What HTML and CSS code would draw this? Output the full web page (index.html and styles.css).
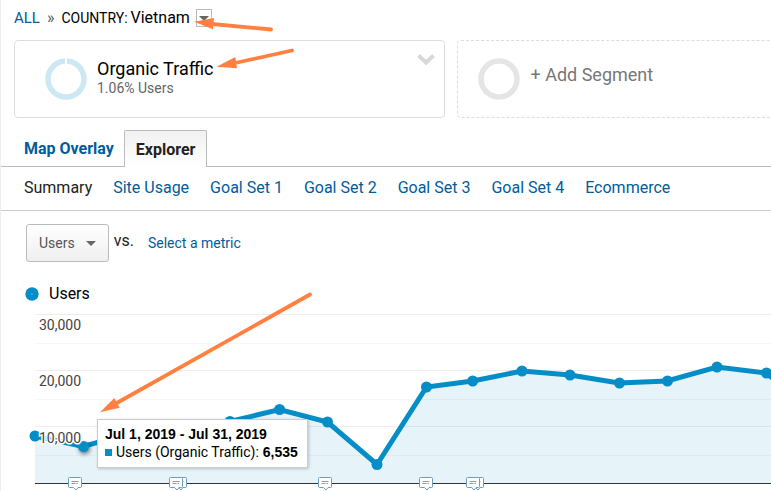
FILE: index.html
```html
<!DOCTYPE html>
<html lang="en">
<head>
<meta charset="utf-8">
<title>Analytics: Vietnam</title>
<link rel="stylesheet" href="styles.css">
</head>
<body>
<main class="report">
  <nav class="crumbs" aria-label="Breadcrumb">
    <a class="crumb-all" href="#">ALL</a>
    <span class="crumb-sep">»</span>
    <span class="crumb-kind">COUNTRY:</span>
    <span class="crumb-value">Vietnam</span>
    <button class="crumb-menu" type="button" aria-label="Change country"><span class="caret"></span></button>
  </nav>

  <section class="segments">
    <div class="segment">
      <svg class="ring" width="42" height="42" viewBox="0 0 42 42" aria-hidden="true">
        <circle cx="21" cy="21" r="18" fill="none" stroke="#cde8f5" stroke-width="5.5"/>
        <path d="M21 0v6" stroke="#fff" stroke-width="2"/>
      </svg>
      <div class="segment-text">
        <span class="segment-name">Organic Traffic</span>
        <span class="segment-share">1.06% Users</span>
      </div>
      <button class="segment-menu" type="button" aria-label="Segment options">
        <svg width="18" height="12" viewBox="0 0 18 12" aria-hidden="true"><path d="M1.500 2.500 9 9.500l7.500-7" fill="none" stroke="#d8d8d8" stroke-width="4"/></svg>
      </button>
    </div>
    <button class="segment segment-add" type="button">
      <svg class="ring" width="42" height="42" viewBox="0 0 42 42" aria-hidden="true">
        <circle cx="21" cy="21" r="18" fill="none" stroke="#e5e5e5" stroke-width="5.5"/>
      </svg>
      <span class="add-label">+ Add Segment</span>
    </button>
  </section>

  <nav class="tabs" aria-label="Views">
    <a class="tab" href="#">Map Overlay</a>
    <a class="tab tab-active" href="#">Explorer</a>
  </nav>

  <nav class="subtabs" aria-label="Metric groups">
    <a class="current" href="#">Summary</a>
    <a href="#">Site Usage</a>
    <a href="#">Goal Set 1</a>
    <a href="#">Goal Set 2</a>
    <a href="#">Goal Set 3</a>
    <a href="#">Goal Set 4</a>
    <a href="#">Ecommerce</a>
  </nav>

  <div class="metrics">
    <button class="metric" type="button">Users <span class="caret"></span></button>
    <span class="versus">vs.</span>
    <a class="metric-link" href="#">Select a metric</a>
  </div>

  <div class="legend">
    <svg width="14" height="14" viewBox="0 0 14 14" aria-hidden="true"><circle cx="7" cy="7" r="6.700" fill="#058dc7"/><circle cx="7" cy="7" r=".5" fill="#fff"/></svg>
    <span>Users</span>
  </div>

  <section class="chart">
    <svg class="plot" width="100%" height="186" role="img" aria-label="Users over time">
      <defs>
        <g id="note">
          <path d="M1.500 .5h11q1 0 1 1v8q0 1-1 1h-2.500l-2 2.500-2.500-2.500H1.500q-1 0-1-1V1.500q0-1 1-1z" fill="#fff" stroke="#6f9dbf"/>
          <path d="M3.500 4.500h7M3.500 6.500h4M8.500 6.500h1.500" stroke="#999" fill="none"/>
        </g>
      </defs>
      <g class="grid-major">
        <path d="M35 9.500H4000M35 65.500H4000M35 121.500H4000"/>
      </g>
      <g class="grid-minor">
        <path d="M35 38.500H4000M35 94.500H4000M35 150.500H4000"/>
      </g>
      <path class="area" d="M35 131 83 141.500 132 128 181 124 230 116.500 279.600 104.500 327.500 117 377 159.500 426.500 82 472.700 76 522 66 570 70 619 78 667 76 717 62 766 68 815 105V178H35z"/>
      <path class="line" d="M35 131 83 141.500 132 128 181 124 230 116.500 279.600 104.500 327.500 117 377 159.500 426.500 82 472.700 76 522 66 570 70 619 78 667 76 717 62 766 68 815 105"/>
      <g class="points">
        <circle cx="35" cy="131" r="5.500"/>
        <circle class="hovered" cx="83.500" cy="141.500" r="5.500"/>
        <circle cx="230" cy="116.500" r="5.500"/>
        <circle cx="279.600" cy="104.500" r="5.500"/>
        <circle cx="327.500" cy="117" r="5.500"/>
        <circle cx="377" cy="159.500" r="5.500"/>
        <circle cx="426.500" cy="82" r="5.500"/>
        <circle cx="472.700" cy="76" r="5.500"/>
        <circle cx="522" cy="66" r="5.500"/>
        <circle cx="570" cy="70" r="5.500"/>
        <circle cx="619.500" cy="78" r="5.500"/>
        <circle cx="667.500" cy="76" r="5.500"/>
        <circle cx="717" cy="62" r="5.500"/>
        <circle cx="766.500" cy="68" r="5.500"/>
      </g>
      <path d="M35 178.500H4000" stroke="#333"/>
      <g class="scale">
        <text x="39" y="25">30,000</text>
        <text x="39" y="81">20,000</text>
        <text x="39" y="138">10,000</text>
      </g>
      <use href="#note" x="68" y="172"/>
      <use href="#note" x="173" y="172"/><use href="#note" x="169" y="172"/>
      <use href="#note" x="318" y="172"/>
      <use href="#note" x="419" y="172"/>
      <use href="#note" x="470" y="172"/><use href="#note" x="466" y="172"/>
    </svg>
    <div class="tooltip">
      <strong>Jul 1, 2019 - Jul 31, 2019</strong>
      <div class="tooltip-row"><span class="swatch"></span><span>Users (Organic Traffic):</span><strong>6,535</strong></div>
    </div>
  </section>

  <svg class="arrows" width="771" height="491" viewBox="0 0 771 491" aria-hidden="true">
    <g fill="none" stroke="#ff8040" stroke-width="3.800" stroke-linecap="round">
      <path d="M212 24 271 29.500M235 63 292 50.500M115 404 310 294.500"/>
    </g>
    <path fill="#ff8040" d="M194 21.700 214 18 213 29.300zM216.500 66.700 235.300 57 237 68.300zM100 412.300 114.300 398 119.700 407.700z"/>
  </svg>
</main>
</body>
</html>
```

FILE: styles.css
```css
* {
  box-sizing: border-box;
}

body {
  margin: 0;
  background: #fff;
  color: #222;
  font: 16px/20px Roboto, "Liberation Sans", sans-serif;
  overflow: hidden;
}

a {
  color: #005c9c;
  text-decoration: none;
}

button {
  font: inherit;
  color: inherit;
  padding: 0;
  background: none;
  border: 0;
}

.report {
  position: relative;
  border-left: 1px solid #eee;
  overflow: hidden;
}

.crumbs {
  display: flex;
  align-items: center;
  height: 40px;
  padding: 0 13px 4px;
  color: #000;
}

.crumb-all {
  font-size: 15px;
}

.crumb-sep {
  margin: 0 7px;
  color: #555;
}

.crumb-kind {
  margin-right: 3px;
  font-size: 14px;
}

.crumb-menu {
  display: flex;
  align-items: center;
  justify-content: center;
  width: 16px;
  height: 18px;
  margin-left: 6px;
  border: 1px solid #bbb;
}

.caret {
  border: 5px solid transparent;
  border-top-color: #666;
  border-bottom: 0;
}

.segments {
  display: flex;
  gap: 12px;
  padding-left: 13px;
}

.segment {
  display: flex;
  flex: 0 0 57%;
  align-items: flex-start;
  gap: 10px;
  height: 78px;
  padding: 17px 9px 0 30px;
  border: 1px solid #ddd;
  border-radius: 4px;
}

.segment-text {
  display: flex;
  flex: 1;
  flex-direction: column;
}

.segment-name {
  color: #000;
  font-size: 18px;
  line-height: 22px;
}

.segment-share {
  color: #666;
  font-size: 14px;
  line-height: 16px;
}

.segment-menu {
  display: flex;
  margin-top: -5px;
}

.segment-add {
  padding-left: 20px;
  border-style: dashed;
}

.add-label {
  color: #777;
  font-size: 18px;
  line-height: 34px;
}

.tabs {
  display: flex;
  margin-top: 12px;
  padding-left: 13px;
  border-bottom: 1px solid #bbb;
  font-weight: 700;
}

.tab {
  height: 36px;
  padding: 0 10px;
  line-height: 37px;
}

.tab-active {
  height: 37px;
  margin-bottom: -1px;
  padding: 0 11px;
  border: 1px solid #bbb;
  border-bottom: 0;
  border-radius: 2px 2px 0 0;
  background: linear-gradient(#f1f1f1, #fff);
  color: #222;
}

.subtabs {
  display: flex;
  gap: 21px;
  height: 44px;
  padding-left: 23px;
  border-bottom: 1px solid #ccc;
  line-height: 42px;
}

.subtabs .current {
  color: #222;
}

.metrics {
  display: flex;
  margin: 13px 0 0 25px;
  color: #222;
}

.metric {
  display: flex;
  align-items: center;
  gap: 11px;
  height: 38px;
  padding: 0 12px;
  border: 1px solid #bbb;
  border-radius: 3px;
  background: linear-gradient(#fff, #efefef);
  color: #555;
  font-size: 14px;
}

.versus {
  margin: 0 14px 0 5px;
  line-height: 34px;
}

.metric-link {
  font-size: 14px;
  line-height: 38px;
}

.legend {
  display: flex;
  align-items: center;
  gap: 10px;
  margin: 22px 0 0 24px;
  height: 20px;
  color: #000;
}

.chart {
  position: relative;
  margin: 1px 0 0 -1px;
}

.plot {
  display: block;
}

.grid-major {
  stroke: #eee;
}

.grid-minor {
  stroke: #f7f7f7;
}

.area {
  fill: #058dc7;
  fill-opacity: 0.1;
}

.line {
  fill: none;
  stroke: #058dc7;
  stroke-width: 5px;
}

.points {
  fill: #058dc7;
}

.hovered {
  filter: drop-shadow(1px 2px 2px #0008);
}

.scale {
  fill: #444;
  stroke: #fff;
  stroke-width: 3px;
  paint-order: stroke;
  font-size: 14px;
}

.tooltip {
  position: absolute;
  top: 114px;
  left: 97px;
  padding: 5px 9px 6px 7px;
  border: 1px solid #ccc;
  background: #fff;
  box-shadow: 1px 1px 3px #0003;
  color: #000;
  font-size: 14px;
  line-height: 18px;
  white-space: nowrap;
}

.tooltip strong {
  display: block;
  font-family: "Liberation Sans", Arial, sans-serif;
}

.tooltip-row {
  display: flex;
  align-items: center;
  gap: 4px;
}

.swatch {
  width: 7px;
  height: 7px;
  background: #058dc7;
}

.arrows {
  position: absolute;
  top: 0;
  left: -1px;
  pointer-events: none;
}
```
